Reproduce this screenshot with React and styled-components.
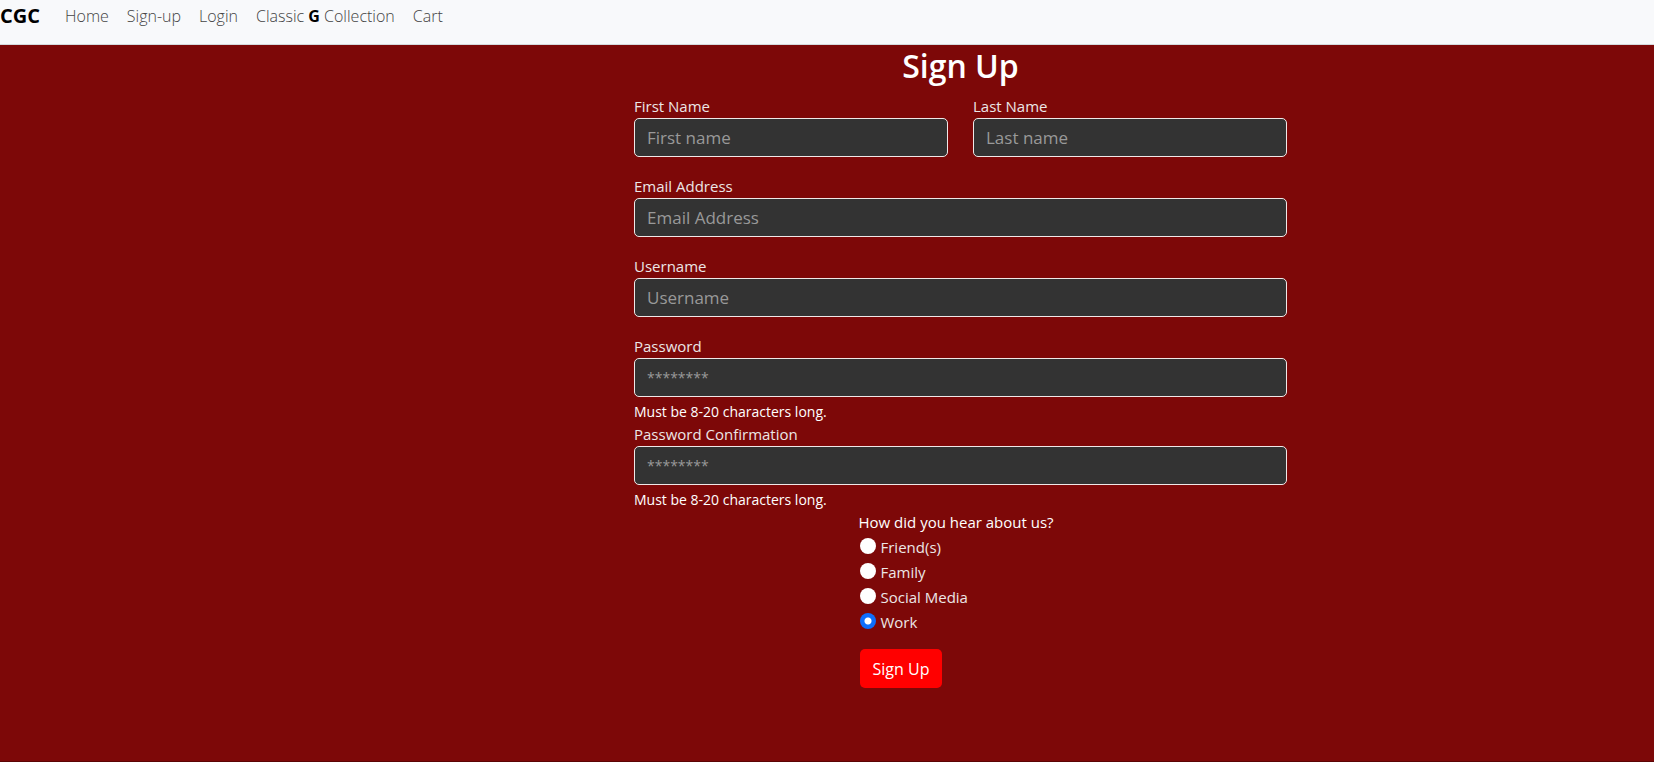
import React from "react";
import styled, { createGlobalStyle } from "styled-components";

const GlobalStyle = createGlobalStyle`
  *, *::before, *::after { box-sizing: border-box; }
  body {
    margin: 0;
    background: #7d0808;
    color: #fff;
    font: 400 15px/24px "Segoe UI", "Open Sans", "Noto Sans", sans-serif;
  }
`;

const Page = styled.div`
  display: flex;
  flex-direction: column;
  min-height: 100vh;
  border-bottom: 1px solid #5c0505;
`;

const NavBar = styled.nav`
  display: flex;
  align-items: flex-start;
  gap: 25px;
  height: 45px;
  padding-top: 4px;
  background: #f8f9fb;
  border-bottom: 1px solid #d5dade;
`;

const Brand = styled.a`
  color: #000;
  font-size: 20px;
  line-height: 23px;
  font-weight: 700;
  text-decoration: none;
`;

const NavList = styled.ul`
  display: flex;
  gap: 18px;
  margin: 0;
  padding: 0;
  list-style: none;
`;

const NavLink = styled.a`
  color: #444;
  font-size: 16px;
  font-weight: 300;
  text-decoration: none;

  b {
    color: #000;
    font-weight: 700;
  }
`;

const Main = styled.main`
  display: grid;
  grid-template-columns: 634fr 653fr 367fr;
`;

const Form = styled.form`
  grid-column: 2;
  min-width: 0;
`;

const Title = styled.h1`
  margin: 0 0 8px;
  padding-top: 1px;
  font-size: 32px;
  line-height: 40px;
  font-weight: 600;
  text-align: center;
`;

const NameRow = styled.div`
  display: grid;
  grid-template-columns: 1fr 1fr;
  gap: 25px;
`;

const FieldBox = styled.div`
  margin-bottom: ${(p) => (p.$hinted ? 0 : 17)}px;
`;

const Label = styled.label`
  display: block;
  color: #ece6e6;
`;

const Input = styled.input`
  display: block;
  width: 100%;
  height: 39px;
  padding: 0 12px;
  color: #fff;
  background: #333;
  border: 1px solid #f0e8e8;
  border-radius: 5px;
  font: inherit;
  font-size: 17px;

  &[type="password"] { font-size: 14px; }
  &::placeholder { color: #999; opacity: 1; }
`;

const Hint = styled.small`
  display: block;
  padding-top: 4px;
  font-size: 14px;
  line-height: 21px;
`;

const Survey = styled.div`
  width: fit-content;
  min-width: 204px;
  margin: 0 auto;
`;

const Options = styled.fieldset`
  margin: 0 0 15px;
  padding: 0;
  border: 0;
`;

const Legend = styled.legend`
  padding: 0;
`;

const Option = styled.label`
  display: flex;
  align-items: center;
  gap: 5px;
  height: 25px;
  padding-left: 1px;
  color: #ece6e6;
`;

const Radio = styled.input`
  appearance: none;
  width: 16px;
  height: 16px;
  margin: 0 0 2px;
  background: #fff;
  border-radius: 50%;

  &:checked {
    background: radial-gradient(circle, #fff 3px, #0d6efd 4px);
  }
`;

const SubmitButton = styled.button`
  height: 39px;
  margin-left: 1px;
  padding: 0 13px;
  color: #fff;
  background: #f00;
  border: 0;
  border-radius: 5px;
  font: inherit;
  font-size: 16px;
`;

function Field({ id, label, hint, ...input }) {
  return (
    <FieldBox $hinted={Boolean(hint)}>
      <Label htmlFor={id}>{label}</Label>
      <Input id={id} aria-describedby={hint ? `${id}-hint` : undefined} {...input} />
      {hint && <Hint id={`${id}-hint`}>{hint}</Hint>}
    </FieldBox>
  );
}

const sources = ["Friend(s)", "Family", "Social Media", "Work"];
const passwordHint = "Must be 8-20 characters long.";

export default function App() {
  return (
    <Page>
      <GlobalStyle />
      <NavBar>
        <Brand href="#">CGC</Brand>
        <NavList>
          <li><NavLink href="#">Home</NavLink></li>
          <li><NavLink href="#">Sign-up</NavLink></li>
          <li><NavLink href="#">Login</NavLink></li>
          <li><NavLink href="#">Classic <b>G</b> Collection</NavLink></li>
          <li><NavLink href="#">Cart</NavLink></li>
        </NavList>
      </NavBar>
      <Main>
        <Form>
          <Title>Sign Up</Title>
          <NameRow>
            <Field id="first" label="First Name" type="text" placeholder="First name" />
            <Field id="last" label="Last Name" type="text" placeholder="Last name" />
          </NameRow>
          <Field id="email" label="Email Address" type="email" placeholder="Email Address" />
          <Field id="username" label="Username" type="text" placeholder="Username" />
          <Field id="password" label="Password" type="password" placeholder="********" hint={passwordHint} />
          <Field id="confirm" label="Password Confirmation" type="password" placeholder="********" hint={passwordHint} />
          <Survey>
            <Options>
              <Legend>How did you hear about us?</Legend>
              {sources.map((name) => (
                <Option key={name}>
                  <Radio type="radio" name="source" value={name} defaultChecked={name === "Work"} />
                  {name}
                </Option>
              ))}
            </Options>
            <SubmitButton type="button">Sign Up</SubmitButton>
          </Survey>
        </Form>
      </Main>
    </Page>
  );
}
